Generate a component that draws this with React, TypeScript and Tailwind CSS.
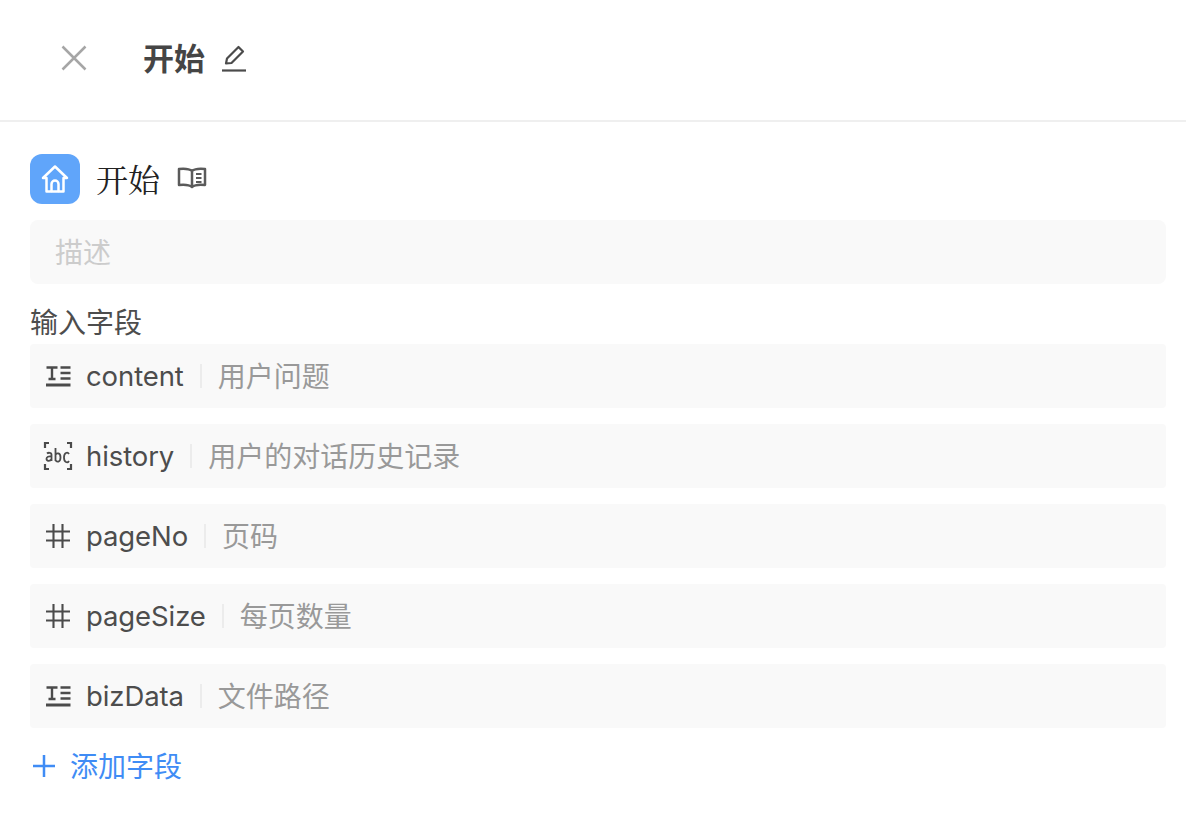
const cjk = "font-['Inter','Noto_Sans_CJK_SC',sans-serif]";

function TextIcon() {
  return (
    <svg width="26" height="22" viewBox="0 0 26 22" fill="none" stroke="#4b4b4b" strokeWidth="2.400" className="shrink-0">
      <path d="M1.500 2.500h11M7 2.500v11.500M3.500 14h7M15.500 2.500h10M15.500 8h10M15.500 13.500h10" />
      <path strokeWidth="3" d="M1 20h24.500" />
    </svg>
  );
}

function HashIcon() {
  return (
    <svg width="26" height="26" viewBox="0 0 26 26" fill="none" stroke="#4b4b4b" strokeWidth="2.100" className="shrink-0">
      <path d="M1 8.500h24M1 17.500h24M8.500 1v24M17.500 1v24" />
    </svg>
  );
}

function AbcIcon() {
  return (
    <svg width="30" height="30" viewBox="0 0 30 30" fill="none" stroke="#4b4b4b" strokeWidth="2.200" className="shrink-0">
      <path d="M6 2H2v5M24 2h4v5M6 28H2v-5M24 28h4v-5" />
      <path strokeWidth="1.800" d="M4 12.500c1-1 4.500-1.300 4.500 1.200V20M8.500 15.500c-3-.5-5 .5-5 2.300 0 2.500 3.500 2.700 5 .5M12.500 7v13M12.500 14c1-2.500 5-2.500 5 2.500s-4 5-5 2.500M26 13c-1.500-2.500-5-1.500-5 3.500s3.500 6 5 3.500" />
    </svg>
  );
}

type Field = { icon: "text" | "abc" | "hash"; name: string; desc: string };

const fields: Field[] = [
  { icon: "text", name: "content", desc: "用户问题" },
  { icon: "abc", name: "history", desc: "用户的对话历史记录" },
  { icon: "hash", name: "pageNo", desc: "页码" },
  { icon: "hash", name: "pageSize", desc: "每页数量" },
  { icon: "text", name: "bizData", desc: "文件路径" },
];

function FieldRow({ icon, name, desc }: Field) {
  return (
    <div className="flex h-16 items-center rounded-[4px] bg-[#f9f9f9] pl-[15px]">
      <div className="flex w-[41px] shrink-0 items-center">
        <div className="flex w-[26px] items-center justify-center">
          {icon === "text" && <TextIcon />}
          {icon === "abc" && <AbcIcon />}
          {icon === "hash" && <HashIcon />}
        </div>
      </div>
      <span className="mt-[2px] text-[27.500px] leading-none tracking-[-0.100px] text-[#4d4d4d]">{name}</span>
      <span className="mx-4 h-6 w-0.5 shrink-0 bg-[#ececec]" />
      <span className="mt-[2px] text-[28px] leading-none text-[#999999]">{desc}</span>
    </div>
  );
}

export default function App() {
  return (
    <div className={`${cjk} h-[828px] w-[1186px] overflow-hidden bg-white`}>
      <header className="flex h-[122px] items-center border-b-2 border-[#efefef] pb-[4px] pl-[61px]">
        <svg width="26" height="26" viewBox="0 0 26 26" fill="none" stroke="#a6a6a6" strokeWidth="2.500" className="shrink-0">
          <path d="M1.500 1.500l23 23M24.500 1.500l-23 23" />
        </svg>
        <span className="ml-[56px] text-[31px] leading-none font-bold text-[#454545]">开始</span>
        <svg width="26" height="28" viewBox="0 0 26 28" fill="none" stroke="#4b4b4b" strokeWidth="2.200" className="ml-[16px] shrink-0">
          <path d="M5 19.500l1-5L17.500 3 22 7.500 10.500 19z" strokeLinejoin="round" />
          <path d="M1 26.500h24" />
        </svg>
      </header>

      <main className="flex flex-col pt-[32px] pr-[20px] pl-[30px]">
        <div className="flex h-[50px] items-center">
          <div className="flex h-[50px] w-[50px] items-center justify-center rounded-[12px] bg-[#60a5fa]">
            <svg width="28" height="30" viewBox="0 0 28 30" fill="none" stroke="white" strokeWidth="2.500" strokeLinejoin="round" strokeLinecap="round">
              <path d="M2 14L14 2.500 26 14h-3.500v13.500h-17V14z" />
              <path d="M10.500 27v-7a3.500 3.500 0 0 1 7 0v7" />
            </svg>
          </div>
          <span className="mt-[4px] ml-4 font-['Liberation_Serif','Noto_Serif_CJK_SC',serif] text-[32px] leading-none text-[#222222]">开始</span>
          <svg width="30" height="22" viewBox="0 0 30 22" fill="none" stroke="#5a5a5a" strokeWidth="2.500" strokeLinejoin="round" className="ml-[17px] -translate-y-[1px] shrink-0">
            <path d="M15 4C12 1.500 7 1.500 2 2v16c5-.5 10-.5 13 2 3-2.500 8-2.500 13-2V2c-5-.5-10-.5-13 2zM15 4v16" />
            <path strokeWidth="1.800" d="M19 7h5.500M19 11h5.500M19 15h5.500" />
          </svg>
        </div>

        <div className="mt-4 flex h-16 items-center rounded-lg bg-[#f9f9f9] pt-[2px] pl-[25px] text-[28px] leading-none text-[#cccccc]">描述</div>

        <div className="mt-[25px] text-[28px] leading-none text-[#4d4d4d]">输入字段</div>

        <div className="mt-[7px] flex flex-col gap-4">
          {fields.map((f) => (
            <FieldRow key={f.name} {...f} />
          ))}
        </div>

        <div className="mt-[23px] flex items-center text-[#3f8cf5]">
          <svg width="24" height="24" viewBox="0 0 24 24" fill="none" stroke="currentColor" strokeWidth="2.500" className="ml-[2px] shrink-0">
            <path d="M12 1v22M1 12h22" />
          </svg>
          <span className="mt-[2px] ml-[14px] text-[28px] leading-none">添加字段</span>
        </div>
      </main>
    </div>
  );
}
